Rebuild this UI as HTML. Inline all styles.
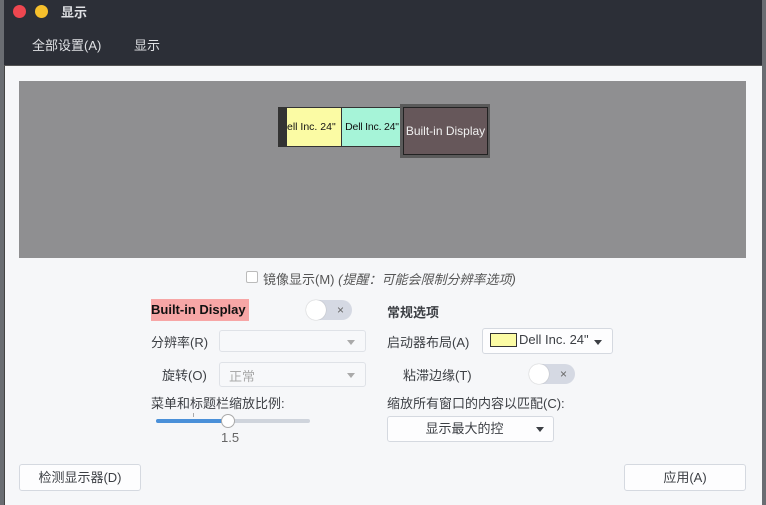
<!DOCTYPE html>
<html><head><meta charset="utf-8"><style>
*{box-sizing:border-box;margin:0;padding:0}
body{width:766px;height:505px;overflow:hidden;background:#6a6d72;font-family:"Liberation Sans","Noto Sans CJK SC",sans-serif;font-size:13px;color:#3c3f44;position:relative}
.abs{position:absolute}
.win{left:4px;top:0;width:758px;height:505px;background:#f6f7f9;border-left:1px solid #444}
.hdr{left:4px;top:0;width:758px;height:66px;background:#2c2f37;border-bottom:1px solid #555}
.dot{width:13px;height:13px;border-radius:50%}
.t{color:#dfe1e4;font-size:13px}
.btn{background:#fdfdfe;border:1px solid #d5d9e0;border-radius:3px;text-align:center;color:#3c3f44}
.combo{background:#f7f8fa;border:1px solid #dfe2e7;border-radius:3px}
.tri{width:0;height:0;border-left:4px solid transparent;border-right:4px solid transparent;border-top:5px solid #3c3f44}
.sw{width:46px;height:20px;border-radius:10px;background:#d5d9e3}
.sw::before{content:"";position:absolute;left:0;top:0;width:20px;height:20px;border-radius:50%;background:#fff;box-shadow:0 0 1px #999}
.sw::after{content:"×";position:absolute;right:8px;top:3px;font-size:12px;line-height:14px;color:#666}
</style></head><body>
<div class="abs win"></div>
<div class="abs hdr"></div>
<div class="abs dot" style="left:13px;top:5px;background:#ee4750"></div>
<div class="abs dot" style="left:35px;top:5px;background:#f6c02c"></div>
<div class="abs t" style="left:61px;top:2px;font-weight:bold">显示</div>
<div class="abs t" style="left:32px;top:35px">全部设置(A)</div>
<div class="abs t" style="left:134px;top:35px">显示</div>

<div class="abs" style="left:19px;top:81px;width:727px;height:177px;background:#8f8f91"></div>
<div class="abs" style="left:278px;top:107px;width:10px;height:40px;background:#333"></div>
<div class="abs" style="left:286px;top:107px;width:56px;height:40px;background:#fbfba4;border:1px solid #333;font-size:10.5px;line-height:38px;color:#111;overflow:hidden;white-space:nowrap;direction:rtl;text-align:left">"ell Inc. 24</div>
<div class="abs" style="left:341px;top:107px;width:62px;height:40px;background:#a6f4d8;border:1px solid #333;font-size:10.5px;line-height:38px;color:#111;white-space:nowrap;overflow:hidden;text-align:center;letter-spacing:-0.2px">Dell Inc. 24"</div>
<div class="abs" style="left:400px;top:104px;width:90px;height:54px;background:#5a5a5a"></div>
<div class="abs" style="left:403px;top:107px;width:85px;height:48px;background:#66575a;border:1px solid #222;color:#f0f0f0;font-size:12px;line-height:46px;text-align:center">Built-in Display</div>

<div class="abs" style="left:246px;top:271px;width:12px;height:12px;border:1px solid #bbb;background:#fff;border-radius:2px"></div>
<div class="abs" style="left:263px;top:269px;color:#555">镜像显示(M) <i>(提醒：可能会限制分辨率选项)</i></div>

<div class="abs" style="left:151px;top:299px;width:98px;height:22px;background:#f7a6a6;color:#111;font-weight:bold;line-height:22px">Built-in Display</div>
<div class="abs sw" style="left:306px;top:300px"></div>
<div class="abs" style="left:387px;top:302px;font-weight:bold">常规选项</div>

<div class="abs" style="left:151px;top:332px">分辨率(R)</div>
<div class="abs combo" style="left:219px;top:330px;width:147px;height:22px"><div class="abs tri" style="right:10px;top:9px;border-top-color:#aaa"></div></div>
<div class="abs" style="left:387px;top:332px">启动器布局(A)</div>
<div class="abs btn" style="left:482px;top:328px;width:131px;height:26px"></div>
<div class="abs" style="left:490px;top:333px;width:27px;height:14px;background:#fbfba4;border:1px solid #333"></div>
<div class="abs" style="left:519px;top:332px">Dell Inc. 24"</div>
<div class="abs tri" style="left:594px;top:340px"></div>

<div class="abs" style="left:162px;top:365px">旋转(O)</div>
<div class="abs combo" style="left:219px;top:362px;width:147px;height:25px;color:#aaa;padding:3px 9px">正常<div class="abs tri" style="right:10px;top:10px;border-top-color:#aaa"></div></div>
<div class="abs" style="left:403px;top:365px">粘滞边缘(T)</div>
<div class="abs sw" style="left:529px;top:364px"></div>

<div class="abs" style="left:151px;top:393px">菜单和标题栏缩放比例:</div>
<div class="abs" style="left:156px;top:419px;width:154px;height:4px;border-radius:2px;background:#cfd4dc"></div>
<div class="abs" style="left:156px;top:419px;width:72px;height:4px;border-radius:2px;background:#4a90d9"></div>
<div class="abs" style="left:193px;top:413px;width:1px;height:4px;background:#aaa"></div>
<div class="abs" style="left:221px;top:414px;width:14px;height:14px;border-radius:50%;background:#fff;border:1px solid #aaa"></div>
<div class="abs" style="left:221px;top:430px;color:#666">1.5</div>

<div class="abs" style="left:387px;top:393px">缩放所有窗口的内容以匹配(C):</div>
<div class="abs btn" style="left:387px;top:416px;width:167px;height:26px;line-height:24px;padding-right:12px">显示最大的控</div>
<div class="abs tri" style="left:536px;top:427px"></div>

<div class="abs btn" style="left:19px;top:464px;width:122px;height:27px;line-height:25px">检测显示器(D)</div>
<div class="abs btn" style="left:624px;top:464px;width:122px;height:27px;line-height:25px">应用(A)</div>
</body></html>
